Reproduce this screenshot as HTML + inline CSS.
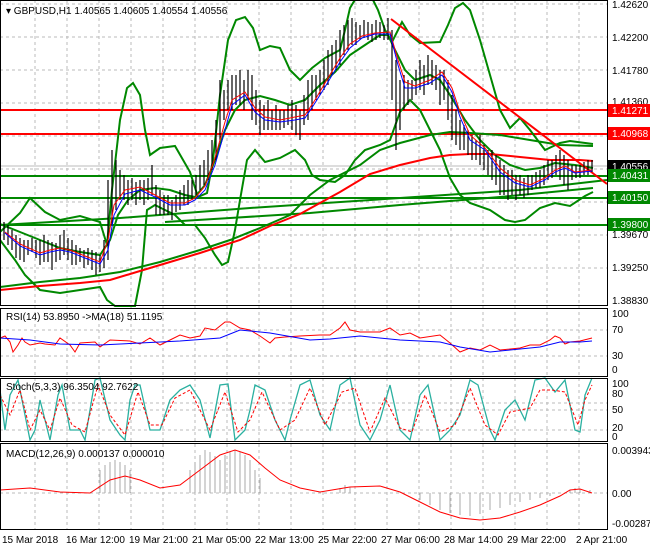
<!DOCTYPE html>
<html><head><meta charset="utf-8"><style>
body{margin:0;background:#fff;width:650px;height:550px;overflow:hidden;font-family:"Liberation Sans",sans-serif}
svg{display:block}
text{font-family:"Liberation Sans",sans-serif;font-size:10px;fill:#000}
</style></head><body>
<svg width="650" height="550" viewBox="0 0 650 550">
<rect width="650" height="550" fill="#fff"/>
<g stroke="#bbb" stroke-dasharray="3,3" stroke-width="1">
<path d="M35 0V530M67 0V530M99 0V530M131 0V530M163 0V530M195 0V530M227 0V530M259 0V530M291 0V530M323 0V530M355 0V530M387 0V530M419 0V530M451 0V530M483 0V530M515 0V530M547 0V530M579 0V530"/>
<path d="M0 4H607M0 37H607M0 70H607M0 103H607M0 136H607M0 169H607M0 202H607M0 235H607M0 268H607M0 330H607M0 356H607M0 403H607M0 410H607M0 430H607M0 493H607"/>
</g>
<line x1="0" y1="166" x2="607" y2="166" stroke="#bbb"/>
<g stroke-width="2">
<line x1="0" y1="110" x2="607" y2="110" stroke="#f00"/>
<line x1="0" y1="134" x2="607" y2="134" stroke="#f00"/>
<line x1="0" y1="176" x2="607" y2="176" stroke="#080"/>
<line x1="0" y1="198" x2="607" y2="198" stroke="#080"/>
<line x1="0" y1="225" x2="607" y2="225" stroke="#080"/>
</g>
<g fill="none" stroke="#080" stroke-width="2">
<polyline points="0,232 20,213 30,198 45,212 60,220 80,216 100,222 107,245 112,190 120,120 127,88 133,83 140,95 145,130 150,155 160,148 175,146 190,172 198,197 207,193 213,160 220,95 228,40 236,20 245,17 253,28 260,50 270,46 280,48 290,70 300,80 312,68 325,58 340,50 345,30 350,8 356,-2 372,-2 378,10 385,30 392,42 402,22 410,35 420,43 440,42 448,25 455,8 463,3 470,10 480,40 490,75 500,110 510,128 520,118 530,130 545,150 560,143 570,141 593,144"/>
<polyline points="0,240 15,260 25,275 40,290 60,293 80,290 100,287 107,300 115,306 135,306 142,270 147,210 155,205 165,210 175,215 185,225 195,225 205,238 215,255 222,265 228,262 235,230 240,200 247,160 255,150 265,162 280,158 295,150 305,160 312,175 320,180 335,182 345,175 355,160 365,150 380,145 390,140 400,112 410,100 420,110 430,130 440,150 450,178 460,195 470,203 490,210 505,220 515,222 525,220 540,208 555,203 570,206 585,196 593,192"/>
<polyline points="0,224 20,232 40,240 60,248 80,252 100,255 110,240 118,215 128,200 140,190 155,188 170,190 185,195 195,197 205,185 215,160 225,130 235,110 245,100 260,96 275,100 290,105 305,100 320,85 335,72 350,55 365,45 380,35 388,35 395,50 405,70 415,80 430,75 440,80 450,95 465,120 480,140 495,155 510,165 525,170 540,168 555,163 575,165 593,168"/>
<polyline points="0,287 40,282 80,278 120,272 160,262 200,250 230,240 260,228 290,215 310,195 330,180 360,165 380,150 400,143 430,135 450,132 470,133 500,135 530,140 560,145 593,146"/>
<polyline points="165,222 230,218 310,213 400,205 500,197 593,188"/>
<polyline points="0,225 120,218 250,208 400,198 520,190 607,180"/>
</g>
<polyline fill="none" stroke="#f00" stroke-width="2" points="0,290 40,286 80,283 110,280 140,271 170,262 200,253 240,240 270,226 300,214 340,192 370,174 400,165 430,158 450,155 470,154 490,154 520,157 550,160 580,160 593,161"/>
<line x1="391" y1="19" x2="607" y2="184" stroke="#f00" stroke-width="2"/>
<g stroke="#000" stroke-width="1.2">
<path d="M4 222V240M8 225V245M12 230V250M16 235V258M20 238V260M24 240V262M28 240V255M32 238V252M36 240V258M40 240V265M44 235V262M48 240V262M52 242V270M56 243V262M60 235V260M64 230V255M68 238V260M72 240V265M76 245V265M80 248V262M84 250V268M88 248V265M92 250V270M96 252V275M100 255V272M104 240V268M108 180V260M112 150V225M116 160V210M120 170V200M124 175V200M128 180V205M132 178V200M136 182V205M140 180V200M144 180V205M148 178V200M152 165V195M156 185V215M160 190V215M164 195V215M168 195V215M172 200V220M176 195V212M180 190V210M184 185V205M188 180V205M192 180V200M196 175V195M200 165V190M204 160V185M208 150V180M212 140V170M216 120V160M220 80V140M224 90V120M228 80V110M232 75V110M236 75V105M240 70V105M244 80V110M248 70V100M252 75V120M256 90V125M260 100V135M264 105V130M268 100V130M272 110V130M276 105V130M280 110V130M284 110V128M288 105V125M292 100V130M296 105V135M300 110V140M304 95V125M308 80V120M312 75V110M316 75V100M320 70V95M324 60V90M328 50V85M332 45V75M336 40V70M340 30V65M344 25V55M348 20V50M352 18V45M356 22V45M360 25V40M364 20V38M368 22V40M372 24V42M376 20V40M380 22V38M384 25V40M388 18V40M392 30V100M396 60V150M400 80V130M404 75V110M408 80V105M412 80V100M416 70V95M420 60V90M424 65V95M428 55V85M432 60V85M436 65V90M440 70V105M444 70V100M448 80V120M452 95V140M456 110V145M460 120V150M464 125V150M468 130V155M472 135V160M476 140V160M480 135V165M484 145V170M488 150V175M492 150V180M496 155V185M500 160V195M504 165V195M508 170V200M512 170V195M516 175V200M520 175V195M524 178V198M528 175V195M532 175V190M536 172V188M540 170V188M544 165V185M548 160V180M552 160V178M556 155V175M560 150V180M564 155V185M568 160V190M572 165V180M576 165V178M580 165V178M584 162V175M588 160V175M592 160V172"/>
</g>
<polyline fill="none" stroke="#f00" stroke-width="1" points="5,232 20,244 40,253 50,250 60,248 70,250 85,256 100,262 108,240 114,205 125,190 140,187 155,195 170,203 185,203 195,198 205,186 215,158 225,122 232,100 245,92 255,108 265,117 280,120 295,117 305,115 315,100 325,83 340,58 350,44 362,36 375,33 390,32 398,60 405,82 415,86 430,80 442,72 452,88 460,112 470,135 485,148 500,168 515,180 530,185 545,178 555,170 565,166 575,172 592,170"/>
<polyline fill="none" stroke="#00f" stroke-width="1" points="5,233 20,246 40,255 50,252 60,250 70,252 85,258 100,264 108,250 114,215 125,194 140,190 155,197 170,205 185,205 195,200 205,190 215,165 225,130 232,105 245,95 255,112 265,120 280,122 295,120 305,118 315,103 325,87 340,62 350,48 362,38 375,34 390,34 398,65 405,88 415,88 430,83 442,75 452,92 460,117 470,140 485,150 500,172 515,183 530,187 545,180 555,172 565,168 575,173 592,171"/>
<g>
<text x="612" y="8">1.42620</text><text x="612" y="41">1.42200</text><text x="612" y="74">1.41780</text><text x="612" y="105">1.41360</text><text x="612" y="238">1.39670</text><text x="612" y="271">1.39250</text><text x="612" y="304">1.38830</text>
<rect x="608" y="104" width="42" height="13" fill="#f00"/><text x="612" y="114" style="fill:#fff">1.41271</text>
<rect x="608" y="127" width="42" height="13" fill="#f00"/><text x="612" y="137" style="fill:#fff">1.40968</text>
<rect x="608" y="160" width="42" height="13" fill="#000"/><text x="612" y="170" style="fill:#fff">1.40556</text>
<rect x="608" y="169" width="42" height="13" fill="#080"/><text x="612" y="179" style="fill:#fff">1.40431</text>
<rect x="608" y="191" width="42" height="13" fill="#080"/><text x="612" y="201" style="fill:#fff">1.40150</text>
<rect x="608" y="218" width="42" height="13" fill="#080"/><text x="612" y="228" style="fill:#fff">1.39800</text>
</g>
<polyline fill="none" stroke="#f00" points="0,338 5,336 10,342 13,352 18,345 22,338 25,342 30,345 40,343 45,344 55,345 60,338 70,345 75,352 80,343 95,342 100,347 110,340 130,341 140,344 150,338 160,345 170,340 180,335 190,338 200,336 205,328 215,330 225,322 230,322 240,328 250,330 260,336 270,343 275,338 285,337 300,336 320,335 330,335 340,328 345,322 350,330 360,332 380,332 390,328 400,335 410,333 420,338 440,335 450,343 460,352 470,348 480,350 490,345 500,350 520,348 530,345 540,345 550,340 555,336 560,338 565,344 570,342 580,341 592,338"/>
<polyline fill="none" stroke="#00f" points="0,338 30,340 60,344 100,345 140,343 180,341 220,338 240,330 270,333 310,340 330,339 360,336 400,340 440,342 460,347 490,352 510,350 540,347 560,342 580,342 592,341"/>
<polyline fill="none" stroke="#2ab0a0" stroke-width="1.3" points="0,390 5,430 10,395 18,380 25,415 30,440 35,430 40,400 45,420 50,440 58,395 62,385 70,430 80,430 85,440 95,380 100,378 110,420 120,435 125,440 130,400 135,385 140,385 150,430 160,430 170,400 180,390 190,385 200,400 210,438 220,385 228,384 235,440 245,430 250,410 255,385 265,390 275,420 285,440 290,420 300,385 310,380 320,415 330,430 340,385 350,378 360,425 370,440 380,420 390,385 400,430 410,440 420,395 428,385 440,440 450,430 460,415 470,380 478,385 490,430 495,440 505,410 515,400 525,420 535,380 545,378 555,392 565,380 575,430 580,432 585,395 592,378"/>
<polyline fill="none" stroke="#f00" stroke-dasharray="3,2" points="0,395 10,415 20,390 30,430 40,410 50,430 60,398 72,425 85,432 98,385 110,415 125,435 138,392 150,425 162,425 175,398 190,390 210,430 225,392 238,432 250,420 262,392 280,430 295,420 310,388 325,425 342,392 355,388 370,432 385,398 400,428 412,432 425,395 440,432 455,425 470,388 485,425 498,435 510,412 530,408 540,390 552,390 565,392 578,425 585,400 592,385"/>
<g stroke="#aaa" stroke-width="1">
<path d="M100 493V470M105 493V465M110 493V462M115 493V460M120 493V462M125 493V465M130 493V470M190 493V470M195 493V462M200 493V455M205 493V450M210 493V452M215 493V456M220 493V460M225 493V455M230 493V452M235 493V450M240 493V452M245 493V455M250 493V460M255 493V470M260 493V478M340 493V488M345 493V485M350 493V487M420 493V500M430 493V505M440 493V510M450 493V513M460 493V515M470 493V516M480 493V514M490 493V510M500 493V508M510 493V505M520 493V502M530 493V500M540 493V498M550 493V496M560 493V493M570 493V490M575 493V488M580 493V489M590 493V490"/>
</g>
<polyline fill="none" stroke="#f00" points="0,490 30,488 60,492 90,493 110,480 125,476 140,480 160,488 180,485 200,470 220,455 235,450 250,455 265,468 280,480 300,488 320,492 350,487 380,486 400,492 420,502 440,512 460,518 480,520 500,518 520,512 540,505 560,496 570,490 580,489 592,493"/>
<g fill="none" stroke="#000" stroke-width="1">
<rect x="0.5" y="0.5" width="607" height="305"/>
<rect x="0.5" y="308.5" width="607" height="68"/>
<rect x="0.5" y="378.5" width="607" height="63"/>
<rect x="0.5" y="443.5" width="607" height="86"/>
</g>
<rect x="4" y="3" width="180" height="14" fill="#fff" opacity="0"/>
<text x="6" y="14">▾ GBPUSD,H1  1.40565 1.40605 1.40554 1.40556</text>
<text x="6" y="320">RSI(14) 53.8950  -&gt;MA(18) 51.1195</text>
<text x="6" y="390">Stoch(5,3,3) 96.3504 92.7622</text>
<text x="6" y="457">MACD(12,26,9) 0.000137 0.000010</text>
<text x="612" y="317">100</text><text x="612" y="333">70</text><text x="612" y="359">30</text><text x="612" y="373">0</text>
<text x="612" y="387">100</text><text x="612" y="397">80</text><text x="612" y="413">50</text><text x="612" y="431">20</text><text x="612" y="440">0</text>
<text x="612" y="454">0.003943</text><text x="612" y="497">0.00</text><text x="612" y="527">-0.002875</text>
<g>
<text x="2" y="543">15 Mar 2018</text><text x="66" y="543">16 Mar 12:00</text><text x="129" y="543">19 Mar 21:00</text><text x="192" y="543">21 Mar 05:00</text><text x="255" y="543">22 Mar 13:00</text><text x="318" y="543">25 Mar 22:00</text><text x="381" y="543">27 Mar 06:00</text><text x="444" y="543">28 Mar 14:00</text><text x="507" y="543">29 Mar 22:00</text><text x="576" y="543">2 Apr 21:00</text>
</g>
</svg>
</body></html>
